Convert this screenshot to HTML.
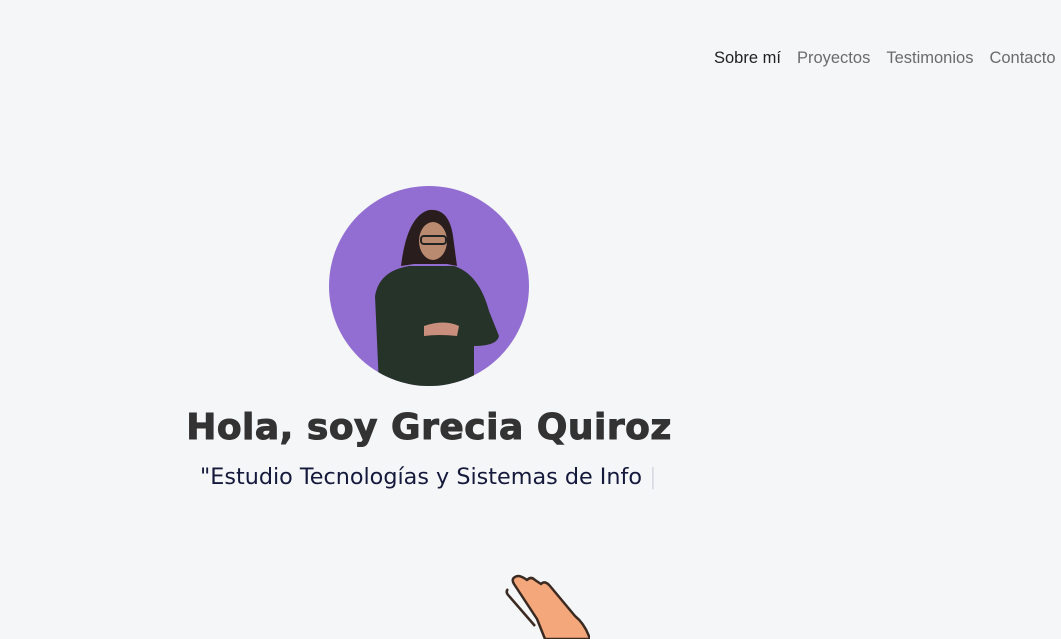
<!DOCTYPE html>
<html><head><meta charset="utf-8"><style>
html,body{margin:0;padding:0;background:#f5f6f8;width:1061px;height:639px;overflow:hidden;font-family:"Liberation Sans","DejaVu Sans",sans-serif}
nav{position:absolute;top:49px;left:714px;font-size:16.5px;color:#6b6b6b;white-space:nowrap}
nav span{margin-right:16px}
nav span.a{color:#222}
.av{position:absolute;left:329px;top:186px;width:200px;height:200px;border-radius:50%;background:#936ed2;overflow:hidden}
h1{position:absolute;left:0;width:858px;top:407px;margin:0;text-align:center;font-family:"DejaVu Sans",sans-serif;font-weight:900;font-size:36px;color:#333;letter-spacing:0.5px;-webkit-text-stroke:1px #333}
.sub{position:absolute;left:200px;top:464px;color:#151a3c;font-family:"DejaVu Sans",sans-serif;font-size:22.3px}
.sub i{font-style:normal;color:#c8cbd8;font-weight:300}
</style></head><body>
<nav><span class="a">Sobre mí</span><span>Proyectos</span><span>Testimonios</span><span>Contacto</span></nav>
<div class="av"><svg width="200" height="200" viewBox="0 0 200 200">
<path d="M72 80 Q78 30 100 24 Q120 22 124 50 L128 80 L118 78 L85 78 Z" fill="#2a1d1e"/>
<ellipse cx="104" cy="55" rx="14" ry="19" fill="#b98970"/>
<rect x="92" y="50" width="25" height="8" rx="3" fill="none" stroke="#222" stroke-width="2"/>
<path d="M50 200 L46 110 Q50 85 80 80 L125 80 Q150 88 160 125 L170 150 Q168 160 145 160 L145 200 Z" fill="#263329"/>
<path d="M95 140 Q115 133 130 140 L128 150 Q110 148 95 150 Z" fill="#c98f7c"/>
</svg></div>
<h1>Hola, soy Grecia Quiroz</h1>
<div class="sub">"Estudio Tecnologías y Sistemas de Info <i>|</i></div>
<svg style="position:absolute;left:505px;top:574px" width="85" height="65" viewBox="0 0 85 65">
<g fill="#f4a77a" stroke="#3a2a22" stroke-width="2.5" stroke-linejoin="round">
<path d="M10 3 Q6 5 9 10 L32 45 L40 65 L85 65 Q80 50 70 42 L45 12 Q40 6 36 10 L30 6 Q26 2 22 6 Q14 0 10 3 Z"/>
<path d="M3 15 Q0 18 4 22 L30 52" fill="none"/>
</g></svg>
</body></html>
